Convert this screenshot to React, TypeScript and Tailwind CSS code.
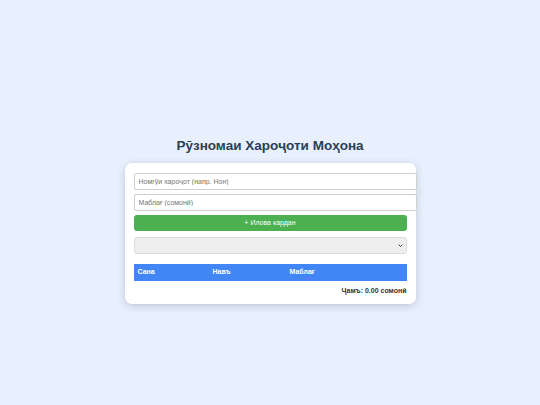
export default function App() {
  return (
    <div
      className="flex min-h-[405px] w-full flex-col items-center bg-[#e8f0fe] pt-[137px]"
      style={{ fontFamily: '"Liberation Sans", Arial, sans-serif' }}
    >
      <h1 className="mb-[9px] text-[13.5px] font-bold leading-[17px] text-[#2c3e50]">
        Рӯзномаи Хароҷоти Моҳона
      </h1>
      <div className="w-[291px] rounded-[7px] bg-white px-[9px] pt-[10px] pb-[7px] shadow-[0_2px_8px_rgba(0,0,0,0.18)]">
        <input
          placeholder="Номгӯи хароҷот (напр. Нон)"
          className="block h-[17px] w-[283px] rounded-[2px] border border-[#d0d0d0] bg-white px-[4px] text-[7px] text-[#333] placeholder:text-[#757575] outline-none"
        />
        <input
          placeholder="Маблағ (сомонӣ)"
          className="mt-[4px] block h-[17px] w-[283px] rounded-[2px] border border-[#d0d0d0] bg-white px-[4px] text-[7px] text-[#333] placeholder:text-[#757575] outline-none"
        />
        <button className="mt-[4px] flex h-[16px] w-full items-center justify-center rounded-[3px] bg-[#4caf50] text-[7px] text-white">
          + Илова кардан
        </button>
        <div className="relative mt-[6px] h-[17px] w-full rounded-[3px] border border-[#dcdcdc] bg-[#efefef]">
          <svg
            viewBox="0 0 10 10"
            className="absolute right-[3px] top-[5px] h-[5px] w-[5px]"
          >
            <path d="M1.5 3.5 L5 7 L8.5 3.5" fill="none" stroke="#222" strokeWidth="1.8" />
          </svg>
        </div>
        <div className="mt-[10px] flex h-[17px] w-full items-center bg-[#4285f4] text-[7px] font-bold text-white">
          <div className="w-[79px] pl-[4px]">Сана</div>
          <div className="w-[77px]">Навъ</div>
          <div className="flex-1">Маблағ</div>
        </div>
        <div className="mt-[5px] text-right text-[7px] font-bold text-[#333]">
          Ҷамъ: 0.00 сомонӣ
        </div>
      </div>
    </div>
  )
}
